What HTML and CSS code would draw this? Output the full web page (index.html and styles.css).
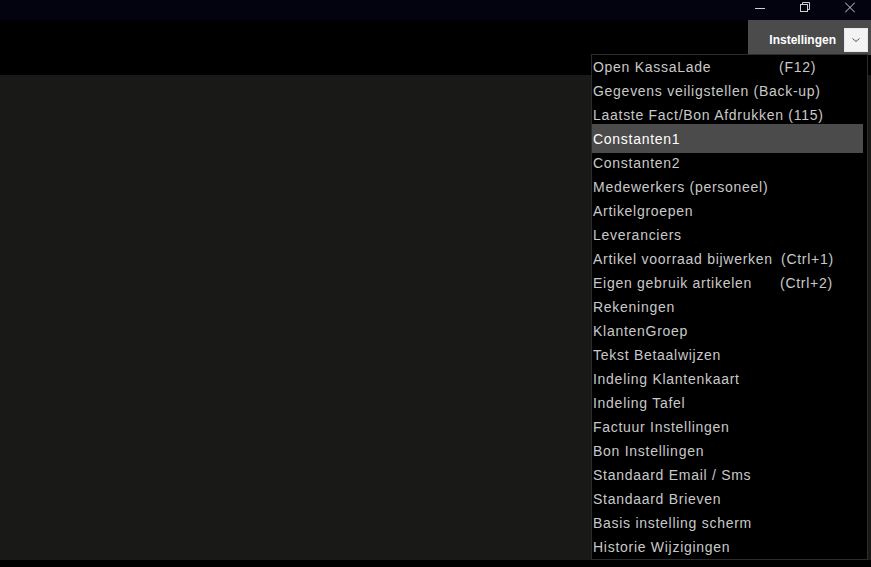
FILE: index.html
```html
<!DOCTYPE html>
<html>
<head>
<meta charset="utf-8">
<link rel="stylesheet" href="styles.css">
</head>
<body>
<div class="window">
  <div class="titlebar">
    <span class="ctl"><svg width="10" height="12" viewBox="0 0 10 12"><path d="M0 7.5H10" stroke="#d0d0d0" stroke-width="1"/></svg></span>
    <span class="ctl"><svg width="10" height="12" viewBox="0 0 10 12" fill="none" stroke="#d0d0d0" stroke-width="1"><rect x="0.5" y="3.5" width="7" height="7"/><path d="M2.5 3.5V1.5H9.5V8.5H7.5"/></svg></span>
    <span class="ctl"><svg width="10" height="12" viewBox="0 0 10 12" fill="none" stroke="#d0d0d0" stroke-width="1"><path d="M0 1.5L10 11.5M10 1.5L0 11.5"/></svg></span>
  </div>
  <div class="toolbar">
    <div class="settings-btn">
      <span class="settings-label">Instellingen</span>
      <span class="drop-box"><svg width="10" height="6" viewBox="0 0 10 6" fill="none" stroke="#555" stroke-width="1"><path d="M1.5 1.5L5 4.5L8.5 1.5"/></svg></span>
    </div>
  </div>
  <div class="content"></div>
  <div class="footer"></div>

  <ul class="menu">
    <li><span class="lbl">Open KassaLade</span><span>(F12)</span></li>
    <li>Gegevens veiligstellen (Back-up)</li>
    <li>Laatste Fact/Bon Afdrukken (115)</li>
    <li class="active">Constanten1</li>
    <li>Constanten2</li>
    <li>Medewerkers (personeel)</li>
    <li>Artikelgroepen</li>
    <li>Leveranciers</li>
    <li><span class="lbl lbl2">Artikel voorraad bijwerken</span><span>(Ctrl+1)</span></li>
    <li><span class="lbl lbl3">Eigen gebruik artikelen</span><span>(Ctrl+2)</span></li>
    <li>Rekeningen</li>
    <li>KlantenGroep</li>
    <li>Tekst Betaalwijzen</li>
    <li>Indeling Klantenkaart</li>
    <li>Indeling Tafel</li>
    <li>Factuur Instellingen</li>
    <li>Bon Instellingen</li>
    <li>Standaard Email / Sms</li>
    <li>Standaard Brieven</li>
    <li>Basis instelling scherm</li>
    <li>Historie Wijzigingen</li>
  </ul>
</div>
</body>
</html>
```

FILE: styles.css
```css
html, body {
  margin: 0;
  padding: 0;
  background: #000;
  overflow: hidden;
}
.window {
  position: relative;
  width: 871px;
  height: 567px;
  display: flex;
  flex-direction: column;
  font-family: "Liberation Sans", Arial, sans-serif;
}
.titlebar {
  height: 20px;
  background: #03020f;
  display: flex;
  justify-content: flex-end;
  align-items: flex-start;
  padding-right: 16px;
  gap: 35px;
}
.ctl {
  width: 10px;
  height: 12px;
  margin-top: 1px;
  display: flex;
}
.toolbar {
  height: 55px;
  background: #000;
  display: flex;
  justify-content: flex-end;
  align-items: flex-start;
}
.settings-btn {
  width: 123px;
  height: 35px;
  box-sizing: border-box;
  background: #4b4b4b;
  display: flex;
  align-items: center;
  justify-content: flex-end;
  padding-right: 3px;
  padding-top: 4px;
}
.settings-label {
  color: #fff;
  font-weight: bold;
  font-size: 12px;
  margin-right: 8px;
  margin-top: 1px;
}
.drop-box {
  width: 24px;
  height: 24px;
  background: #f3f3f3;
  display: flex;
  align-items: center;
  justify-content: center;
  box-shadow: inset 0 0 0 1px #e6e8ee;
}
.content {
  height: 485px;
  background: #191917;
}
.footer {
  flex: 1;
  background: #000;
}
.menu {
  position: absolute;
  left: 591px;
  top: 54px;
  width: 277px;
  height: 506px;
  box-sizing: border-box;
  margin: 0;
  padding: 0;
  list-style: none;
  background: #000;
  border: 1px solid #2c2c2c;
}
.menu li {
  height: 24px;
  line-height: 24px;
  padding-left: 1px;
  margin-right: 4px;
  color: #c9c9c9;
  font-size: 14px;
  letter-spacing: 0.72px;
  white-space: nowrap;
  display: flex;
}
.menu li.active {
  background: #4b4b4b;
  color: #fff;
  height: 29px;
  line-height: 31px;
  margin-top: -3px;
  margin-bottom: -2px;
}
.lbl {
  width: 186px;
  flex: none;
}
.lbl2 {
  width: 188px;
}
.lbl3 {
  width: 187px;
}
```
